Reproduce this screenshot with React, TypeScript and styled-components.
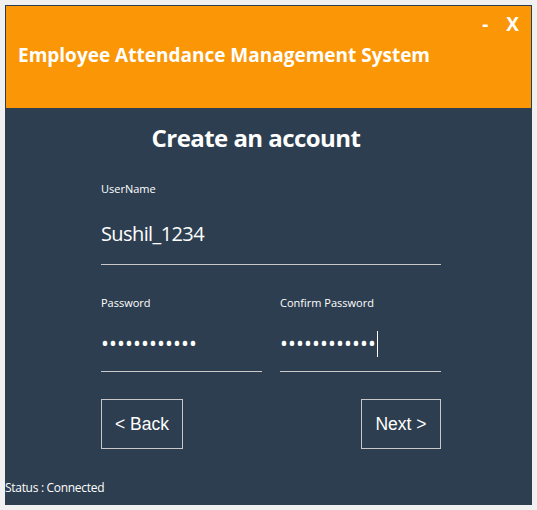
import React from "react";
import styled, { createGlobalStyle } from "styled-components";

const GlobalStyle = createGlobalStyle`
  html, body {
    margin: 0;
    padding: 0;
    background: #f0f0f0;
  }
  body {
    font-family: "Open Sans", "Noto Sans", sans-serif;
    color: #ffffff;
  }
`;

const Window = styled.div`
  box-sizing: border-box;
  width: 527px;
  height: 500px;
  margin: 5px;
  border: 1px solid #2d3e50;
  background: #2d3e50;
  display: flex;
  flex-direction: column;
`;

const Header = styled.header`
  height: 102px;
  background: #fb9606;
  display: flex;
  flex-direction: column;
  padding: 0 12px;
`;

const Controls = styled.div`
  display: flex;
  justify-content: flex-end;
  gap: 18px;
  margin-top: 7px;
  font-size: 19px;
  line-height: 22px;
  font-weight: 700;
`;

const Control = styled.span`
  cursor: pointer;
`;

const Title = styled.h1`
  margin: 8px 0 0;
  font-size: 19px;
  line-height: 24px;
  font-weight: 700;
`;

const Panel = styled.main`
  flex: 1;
  display: flex;
  flex-direction: column;
  padding-top: 15px;
`;

const Heading = styled.h2`
  width: 500px;
  margin: 0;
  text-align: center;
  font-size: 24px;
  line-height: 30px;
  font-weight: 700;
  letter-spacing: -0.55px;
`;

const Form = styled.div`
  width: 340px;
  margin: 28px 0 0 95px;
  display: flex;
  flex-direction: column;
`;

const Row = styled.div`
  display: flex;
  gap: 18px;
  margin-top: 30px;
`;

const Field = styled.div`
  flex: 1;
  display: flex;
  flex-direction: column;
`;

const Label = styled.label`
  font-size: 11px;
  line-height: 15px;
  margin-bottom: 7px;
`;

const InputLine = styled.div<{ $height: number }>`
  height: ${({ $height }) => $height}px;
  border-bottom: 1px solid #c8c8c8;
  display: flex;
  align-items: center;
`;

const Value = styled.span`
  font-size: 20px;
  line-height: 28px;
  letter-spacing: -0.6px;
`;

const Dots = styled.span`
  font-size: 21px;
  line-height: 24px;
  letter-spacing: 0.1px;
  margin-top: -3px;
`;

const Caret = styled.span`
  display: inline-block;
  width: 1px;
  height: 26px;
  margin-left: 1px;
  background: #ffffff;
`;

const Buttons = styled.div`
  display: flex;
  justify-content: space-between;
  margin-top: 27px;
`;

const Button = styled.button<{ $width: number }>`
  box-sizing: border-box;
  width: ${({ $width }) => $width}px;
  height: 50px;
  background: transparent;
  border: 1px solid #c8c8c8;
  color: #ffffff;
  font-family: "Liberation Sans", Arial, sans-serif;
  font-size: 17.5px;
  padding: 0;
  cursor: pointer;
`;

const Status = styled.footer`
  margin-top: auto;
  margin-bottom: 8px;
  margin-left: -1px;
  font-size: 12px;
  line-height: 16px;
  letter-spacing: -0.3px;
`;

export default function App(): JSX.Element {
  return (
    <>
      <GlobalStyle />
      <Window>
        <Header>
          <Controls>
            <Control>-</Control>
            <Control>X</Control>
          </Controls>
          <Title>Employee Attendance Management System</Title>
        </Header>
        <Panel>
          <Heading>Create an account</Heading>
          <Form>
            <Field>
              <Label>UserName</Label>
              <InputLine $height={61}>
                <Value>Sushil_1234</Value>
              </InputLine>
            </Field>
            <Row>
              <Field>
                <Label>Password</Label>
                <InputLine $height={54}>
                  <Dots>••••••••••••</Dots>
                </InputLine>
              </Field>
              <Field>
                <Label>Confirm Password</Label>
                <InputLine $height={54}>
                  <Dots>••••••••••••</Dots>
                  <Caret />
                </InputLine>
              </Field>
            </Row>
            <Buttons>
              <Button $width={82}>&lt; Back</Button>
              <Button $width={80}>Next &gt;</Button>
            </Buttons>
          </Form>
          <Status>Status : Connected</Status>
        </Panel>
      </Window>
    </>
  );
}
